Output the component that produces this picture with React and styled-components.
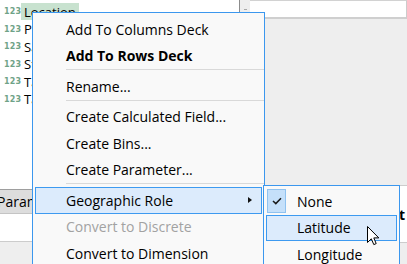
import React from 'react';
import styled, { createGlobalStyle } from 'styled-components';

const Global = createGlobalStyle`
  html, body { margin: 0; padding: 0; background: #eeeeee; overflow: hidden; }
  body { font-family: "Open Sans", "Noto Sans", sans-serif; color: #000; }
  * { box-sizing: border-box; }
`;

const Screen = styled.div`
  position: relative;
  width: 407px;
  height: 264px;
  overflow: hidden;
  display: grid;
  grid-template-columns: 250px 1fr;
  background: #eeeeee;
`;

const LeftPane = styled.div`
  display: grid;
  grid-template-rows: 189px 25px 28px 1fr;
  background: #eeeeee;
`;

const FieldArea = styled.div`
  display: flex;
  background: #ffffff;
`;

const FieldList = styled.div`
  flex: 1;
  padding: 3px 0 0 4px;
  display: flex;
  flex-direction: column;
`;

const FieldRow = styled.div`
  height: 17.5px;
  display: flex;
  align-items: center;
`;

const TypeIcon = styled.span`
  width: 17px;
  font-family: "DejaVu Sans", sans-serif;
  font-size: 8px;
  font-weight: bold;
  color: #6fa388;
  letter-spacing: 0.2px;
`;

const FieldName = styled.span`
  height: 17px;
  display: flex;
  align-items: center;
  padding: 0 3px;
  font-size: 13px;
  background: ${p => (p.$selected ? '#c8e2cf' : 'transparent')};
`;

const Scrollbar = styled.div`
  width: 11px;
  background: #eeeeee;
  border-left: 1px solid #8c8c8c;
  display: flex;
  justify-content: center;
  padding-top: 9px;
`;

const ScrollMark = styled.div`
  width: 3px;
  height: 1px;
  background: #a8a8a8;
`;

const SectionBar = styled.div`
  background: #dddddd;
  border-top: 1px solid #9e9e9e;
  border-bottom: 1px solid #c4c4c4;
  display: flex;
  align-items: center;
  font-size: 14px;
  text-indent: -3px;
  white-space: nowrap;
  overflow: hidden;
`;

const WhiteStrip = styled.div`
  background: #ffffff;
  border-bottom: 1px solid #cccccc;
`;

const RightPane = styled.div`
  display: flex;
  flex-direction: column;
  background: #eeeeee;
`;

const TopBar = styled.div`
  height: 19px;
  background: #ffffff;
  border-top: 1px solid #d2d2d2;
  border-right: 1px solid #cccccc;
  border-bottom: 2px solid #cfcfcf;
`;

const Card = styled.div`
  margin-top: 166px;
  height: 58px;
  background: #ffffff;
  border-top: 1px solid #cccccc;
  border-bottom: 1px solid #cccccc;
  display: flex;
  align-items: center;
  justify-content: flex-end;
  padding-right: 2px;
  font-size: 14px;
  font-weight: bold;
`;

const Menu = styled.div`
  position: absolute;
  left: ${p => p.$left}px;
  top: ${p => p.$top}px;
  width: ${p => p.$width}px;
  height: 300px;
  background: #f9f9f9;
  border: 1px solid #3b97ee;
  padding-top: ${p => p.$padTop}px;
  display: flex;
  flex-direction: column;
`;

const Item = styled.div`
  position: relative;
  flex: none;
  height: 26.5px;
  margin: 0 2px;
  padding-left: 30px;
  display: flex;
  align-items: center;
  font-size: 14px;
  white-space: nowrap;
  font-weight: ${p => (p.$bold ? 700 : 400)};
  color: ${p => (p.$disabled ? '#a2a2a2' : '#000000')};
  border: 1px solid ${p => (p.$active ? '#3d9af0' : 'transparent')};
  background: ${p => (p.$active ? '#dcebfc' : 'transparent')};
`;

const Separator = styled.div`
  flex: none;
  height: 4px;
  margin-left: 33px;
  border-top: 1px solid #d9d9d9;
`;

const SubArrow = styled.span`
  margin-left: auto;
  margin-right: 9px;
  width: 0;
  height: 0;
  border-left: 4px solid #111;
  border-top: 3.5px solid transparent;
  border-bottom: 3.5px solid transparent;
`;

const CheckBox = styled.span`
  position: absolute;
  left: 0;
  top: 0;
  width: 19px;
  height: 24px;
  background: #c5e0fa;
  border: 1px solid #8fc2f0;
  display: flex;
  align-items: center;
  justify-content: center;
`;

const Pointer = styled.svg`
  position: absolute;
  left: 367px;
  top: 226px;
`;

const fields = ['Location', 'Profit', 'Sales', 'State', 'Tag', 'Tax'];

export default function App() {
  return (
    <>
      <Global />
      <Screen>
        <LeftPane>
          <FieldArea>
            <FieldList>
              {fields.map((f, i) => (
                <FieldRow key={f}>
                  <TypeIcon>123</TypeIcon>
                  <FieldName $selected={i === 0}>{f}</FieldName>
                </FieldRow>
              ))}
            </FieldList>
            <Scrollbar>
              <ScrollMark />
            </Scrollbar>
          </FieldArea>
          <SectionBar>Parameters</SectionBar>
          <WhiteStrip />
          <div />
        </LeftPane>
        <RightPane>
          <TopBar />
          <Card>Text</Card>
        </RightPane>

        <Menu $left={32} $top={12} $width={233} $padTop={3}>
          <Item>Add To Columns Deck</Item>
          <Item $bold>Add To Rows Deck</Item>
          <Separator />
          <Item>Rename...</Item>
          <Separator />
          <Item>Create Calculated Field...</Item>
          <Item>Create Bins...</Item>
          <Item>Create Parameter...</Item>
          <Separator />
          <Item $active>
            Geographic Role
            <SubArrow />
          </Item>
          <Item $disabled>Convert to Discrete</Item>
          <Item>Convert to Dimension</Item>
        </Menu>

        <Menu $left={263} $top={185} $width={137} $padTop={2}>
          <Item>
            <CheckBox>
              <svg width="10" height="8" viewBox="0 0 10 8">
                <path d="M1 4 L3.8 6.6 L9 1.2" fill="none" stroke="#1a1a1a" strokeWidth="1.5" />
              </svg>
            </CheckBox>
            None
          </Item>
          <Item $active>Latitude</Item>
          <Item>Longitude</Item>
        </Menu>

        <Pointer width="13" height="20" viewBox="0 0 13 20">
          <path
            d="M0.5 0.5 L0.5 16.5 L4.3 12.8 L6.8 18.6 L9.2 17.6 L6.8 11.9 L11.8 11.9 Z"
            fill="#ffffff"
            stroke="#000000"
            strokeWidth="1"
            strokeLinejoin="miter"
          />
        </Pointer>
      </Screen>
    </>
  );
}
